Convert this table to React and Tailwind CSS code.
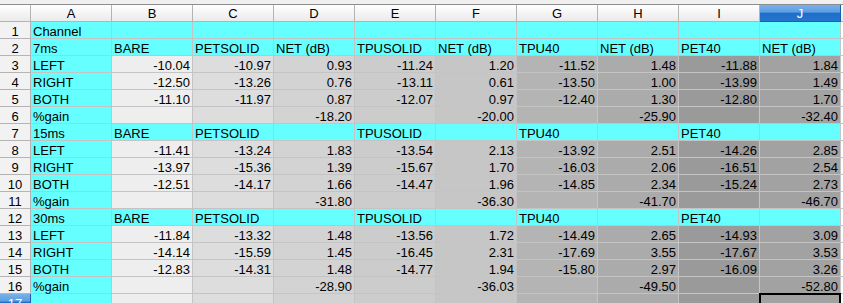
import React from 'react';

const COLS = ['A', 'B', 'C', 'D', 'E', 'F', 'G', 'H', 'I', 'J'];

// background per column for the data rows
const colBg = [
  'bg-[#66ffff]',
  'bg-[#eeeeee]',
  'bg-[#dddddd]',
  'bg-[#d3d3d3]',
  'bg-[#cccccc]',
  'bg-[#c6c6c6]',
  'bg-[#b4b4b4]',
  'bg-[#ababab]',
  'bg-[#9a9a9a]',
  'bg-[#a2a2a2]',
];

const header = (ms) => [ms, 'BARE', 'PETSOLID', '', 'TPUSOLID', '', 'TPU40', '', 'PET40', ''];

const rows = [
  { cyan: true, cells: ['Channel', '', '', '', '', '', '', '', '', ''] },
  { cyan: true, cells: ['7ms', 'BARE', 'PETSOLID', 'NET (dB)', 'TPUSOLID', 'NET (dB)', 'TPU40', 'NET (dB)', 'PET40', 'NET (dB)'] },
  { cells: ['LEFT', '-10.04', '-10.97', '0.93', '-11.24', '1.20', '-11.52', '1.48', '-11.88', '1.84'] },
  { cells: ['RIGHT', '-12.50', '-13.26', '0.76', '-13.11', '0.61', '-13.50', '1.00', '-13.99', '1.49'] },
  { cells: ['BOTH', '-11.10', '-11.97', '0.87', '-12.07', '0.97', '-12.40', '1.30', '-12.80', '1.70'] },
  { cells: ['%gain', '', '', '-18.20', '', '-20.00', '', '-25.90', '', '-32.40'] },
  { cyan: true, cells: header('15ms') },
  { cells: ['LEFT', '-11.41', '-13.24', '1.83', '-13.54', '2.13', '-13.92', '2.51', '-14.26', '2.85'] },
  { cells: ['RIGHT', '-13.97', '-15.36', '1.39', '-15.67', '1.70', '-16.03', '2.06', '-16.51', '2.54'] },
  { cells: ['BOTH', '-12.51', '-14.17', '1.66', '-14.47', '1.96', '-14.85', '2.34', '-15.24', '2.73'] },
  { cells: ['%gain', '', '', '-31.80', '', '-36.30', '', '-41.70', '', '-46.70'] },
  { cyan: true, cells: header('30ms') },
  { cells: ['LEFT', '-11.84', '-13.32', '1.48', '-13.56', '1.72', '-14.49', '2.65', '-14.93', '3.09'] },
  { cells: ['RIGHT', '-14.14', '-15.59', '1.45', '-16.45', '2.31', '-17.69', '3.55', '-17.67', '3.53'] },
  { cells: ['BOTH', '-12.83', '-14.31', '1.48', '-14.77', '1.94', '-15.80', '2.97', '-16.09', '3.26'] },
  { cells: ['%gain', '', '', '-28.90', '', '-36.03', '', '-49.50', '', '-52.80'] },
  { cells: ['', '', '', '', '', '', '', '', '', ''], selected: true },
];

const isNumber = (v) => /^-?\d+(\.\d+)?$/.test(v);

const App = () => {
  return (
    <div
      className="w-[843px] h-[303px] overflow-hidden bg-white text-[13px] text-black"
      style={{ fontFamily: '"Liberation Sans", Arial, sans-serif' }}
    >
      <div className="h-[4px] bg-[#f0f0f0]" />

      {/* column header */}
      <div className="flex h-[18px] border-t border-[#8c8c8c] bg-[linear-gradient(#ffffff,#e9e9e9)]">
        <div className="w-[31px] shrink-0 border-r border-b border-[#b4b4b4]" />
        {COLS.map((c) => (
          <div
            key={c}
            className={
              c === 'J'
                ? 'w-[81px] shrink-0 flex items-center justify-center border-r border-b border-[#1c5fae] text-white bg-[linear-gradient(#79b1ea_0%,#5c9de2_45%,#1e6dc8_50%,#2775cd_100%)] leading-[17px]'
                : 'w-[81px] shrink-0 flex items-center justify-center border-r border-b border-[#b4b4b4] leading-[17px]'
            }
          >
            {c}
          </div>
        ))}
        <div className="flex-1 border-b border-[#b4b4b4]" />
      </div>

      {rows.map((row, i) => (
        <div key={i} className="flex h-[17px]">
          <div
            className={
              row.selected
                ? 'w-[31px] shrink-0 flex justify-center border-r border-b border-[#1c5fae] text-white bg-[linear-gradient(#79b1ea_0%,#5c9de2_45%,#1e6dc8_50%,#2775cd_100%)] leading-[17px] pt-px'
                : 'w-[31px] shrink-0 flex justify-center border-r border-b border-[#b4b4b4] bg-[#f2f2f2] leading-[17px] pt-px'
            }
          >
            {i + 1}
          </div>
          {row.cells.map((v, j) => {
            const bg = row.cyan ? 'bg-[#66ffff]' : colBg[j];
            const align = isNumber(v) ? 'justify-end pr-[2px]' : 'justify-start pl-[2px]';
            const sel = row.selected && j === 9;
            return (
              <div
                key={j}
                className={`relative w-[81px] shrink-0 flex ${align} ${bg} border-r border-b border-[#c4c4c4] leading-[17px] pt-px whitespace-nowrap`}
              >
                {v}
                {sel && <div className="absolute z-10 -left-px -top-px w-[82px] h-[18px] border-2 border-black" />}
              </div>
            );
          })}
          <div className="flex-1 border-b border-[#c4c4c4] bg-white" />
        </div>
      ))}
    </div>
  );
};

export default App;
